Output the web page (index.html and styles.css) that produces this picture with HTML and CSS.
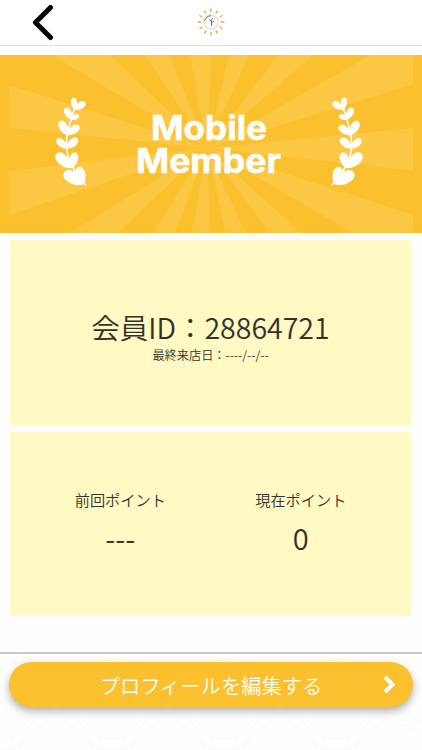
FILE: index.html
```
<!DOCTYPE html>
<html lang="ja">
<head>
    <meta charset="UTF-8">
    <meta name="viewport" content="width=device-width, initial-scale=1.0">
    <title>Mobile Member</title>
    <link rel="stylesheet" href="styles.css">
</head>
<body>

    <header class="header">
        <button class="back" aria-label="戻る">
            <svg width="22" height="36" viewBox="0 0 22 36"><path d="M18.500 2.500L3.500 17.500L18.500 32.500"/></svg>
        </button>
        <svg class="logo" width="30" height="30" viewBox="-15 -14 30 30">
            <defs><path id="petal" d="M0-9Q-2-11.500 0-14Q2-11.500 0-9"/></defs>
            <g class="petals">
                <use href="#petal"/>
                <use href="#petal" transform="rotate(30)"/>
                <use href="#petal" transform="rotate(60)"/>
                <use href="#petal" transform="rotate(90)"/>
                <use href="#petal" transform="rotate(120)"/>
                <use href="#petal" transform="rotate(150)"/>
                <use href="#petal" transform="rotate(180)"/>
                <use href="#petal" transform="rotate(210)"/>
                <use href="#petal" transform="rotate(240)"/>
                <use href="#petal" transform="rotate(270)"/>
                <use href="#petal" transform="rotate(300)"/>
                <use href="#petal" transform="rotate(330)"/>
            </g>
            <circle class="logo-ring" r="7"/>
            <path class="logo-arc" d="M-6.500-1Q-5-6 0-6.300"/>
            <path class="logo-mark" d="M-2-2.500L0-1L2-4M0-1L1 0L3-.5M.5 0V4"/>
        </svg>
    </header>

    <main>
        <svg class="banner" viewBox="0 0 422 178">
            <path class="rays" d="M207 93L9 30V73ZM207 93L9 116V160ZM207 93L52 0H110ZM207 93L145 0H169ZM207 93L190 0H211ZM207 93L229 0H249ZM207 93L279 0H313ZM207 93L371 0H413V29ZM207 93L413 73V116ZM207 93L413 160V178H353ZM207 93L301 178H270ZM207 93L245 178H226ZM207 93L210 178H192ZM207 93L175 178H153ZM207 93L118 178H70Z"/>
            <defs>
                <path id="leaf" d="M0 0C-4-2.500-5.500-12-1-13C4-14 4.500-4 0 0Z"/>
                <g id="laurel">
                    <path class="stem" d="M85.500 129.500Q77 122 73 112Q67 103 66.500 92Q66 80 70 68L75 52"/>
                    <use href="#leaf" transform="translate(74.500 54.500) rotate(-2) scale(.9)"/>
                    <use href="#leaf" transform="translate(74 54.500) rotate(60) scale(1.020)"/>
                    <use href="#leaf" transform="translate(71.500 64.500) rotate(-25) scale(1)"/>
                    <use href="#leaf" transform="translate(70 64.500) rotate(67) scale(.76)"/>
                    <use href="#leaf" transform="translate(67.500 80) rotate(-25) scale(1.220)"/>
                    <use href="#leaf" transform="translate(67 80) rotate(54) scale(1.150)"/>
                    <use href="#leaf" transform="translate(67 93.500) rotate(-44) scale(1.050)"/>
                    <use href="#leaf" transform="translate(66.500 93.500) rotate(50) scale(1.130)"/>
                    <use href="#leaf" transform="translate(71 113) rotate(-43) scale(1.560)"/>
                    <use href="#leaf" transform="translate(71.500 113.500) rotate(16) scale(1.250)"/>
                    <use href="#leaf" transform="translate(84 129) rotate(-58) scale(1.750)"/>
                    <use href="#leaf" transform="translate(83.500 129) rotate(-14) scale(1.350)"/>
                </g>
            </defs>
            <use href="#laurel"/>
            <use href="#laurel" transform="translate(418 0) scale(-1 1)"/>
            <text class="banner-title" x="151" y="84.500" textLength="116" lengthAdjust="spacingAndGlyphs">Mobile</text>
            <text class="banner-title" x="136" y="118" textLength="145" lengthAdjust="spacingAndGlyphs">Member</text>
        </svg>

        <section class="card">
            <p class="member-id">会員ID：28864721</p>
            <p class="last-visit">最終来店日：----/--/--</p>
        </section>

        <section class="card points">
            <div class="point">
                <p class="point-label">前回ポイント</p>
                <p class="point-value">---</p>
            </div>
            <div class="point">
                <p class="point-label">現在ポイント</p>
                <p class="point-value">0</p>
            </div>
        </section>
    </main>

    <footer class="footer">
        <!-- faint ring pattern behind the button -->
        <svg class="pattern" viewBox="0 0 422 96">
            <defs>
                <g id="rings">
                    <circle cx="0" cy="45" r="40"/>
                    <circle cx="0" cy="45" r="50"/>
                    <circle cx="56" cy="109" r="40"/>
                    <circle cx="56" cy="109" r="50"/>
                </g>
            </defs>
            <use href="#rings"/>
            <use href="#rings" x="112"/>
            <use href="#rings" x="224"/>
            <use href="#rings" x="336"/>
        </svg>
        <button class="edit-button">
            <span>プロフィールを編集する</span>
            <svg class="chevron" width="14" height="20" viewBox="0 0 14 20"><path d="M2 2L9.500 9.500L2 17"/></svg>
        </button>
    </footer>

</body>
</html>
```
FILE: styles.css
```
* {
    box-sizing: border-box;
}
body {
    margin: 0;
    height: 750px;
    display: flex;
    flex-direction: column;
    overflow: hidden;
    background-color: #fefefe;
    color: #333129;
    font-family: "Noto Sans CJK JP", sans-serif;
    font-weight: 350;
}
p {
    margin: 0;
}
button {
    border: none;
    padding: 0;
    font-family: inherit;
}
.header {
    height: 46px;
    flex: none;
    display: grid;
    grid-template-columns: 1fr 30px 1fr;
    align-items: center;
    background-color: #fff;
    border-bottom: 1px solid #e2e2e2;
}
.back {
    display: flex;
    justify-self: start;
    margin-left: 32px;
    background: none;
}
.back path {
    fill: none;
    stroke: #000;
    stroke-width: 5;
    stroke-linecap: round;
    stroke-linejoin: round;
}
.petals {
    fill: #e3b95c;
}
.logo-ring {
    fill: #fff;
    stroke: #e8e8e8;
    stroke-width: 2;
}
.logo-arc, .logo-mark {
    fill: none;
    stroke: #77736c;
    stroke-width: 1;
}
main {
    height: 607px;
    flex: none;
    padding-top: 9px;
}
.banner {
    display: block;
    width: 422px;
    height: 178px;
    background-color: #fbc02d;
}
.rays {
    fill: #fcc743;
}
#leaf {
    fill: #fff;
}
.stem {
    fill: none;
    stroke: #fff;
    stroke-width: 1.7;
    stroke-linecap: round;
}
.banner-title {
    fill: #fff;
    stroke: #fff;
    stroke-width: 0.5;
    font-family: Inter, sans-serif;
    font-size: 34px;
    font-weight: 700;
}
.card {
    height: 185px;
    margin: 7px 11px 0 10px;
    padding-top: 66px;
    background-color: #fff9c4;
    text-align: center;
}
.member-id {
    font-size: 28.500px;
    line-height: 42px;
}
.last-visit {
    font-size: 12.200px;
    line-height: 14px;
}
.points {
    height: 184px;
    display: grid;
    grid-template-columns: 1fr 1fr;
    padding: 56px 20px 0;
}
.point-label {
    font-size: 15.200px;
    line-height: 22px;
}
.point-value {
    margin-top: 5px;
    font-size: 29px;
    line-height: 44px;
}
.footer {
    position: relative;
    flex: 1;
    margin-top: -1px;
    padding: 8px 9px;
    border-top: 2px solid #c8c8c8;
}
.pattern {
    position: absolute;
    left: 0;
    top: 0;
    width: 422px;
    height: 96px;
    fill: none;
    stroke: #fafaf8;
}
.edit-button {
    position: relative;
    display: grid;
    grid-template-columns: 30px 1fr 30px;
    align-items: center;
    width: 404px;
    height: 45px;
    border-radius: 23px;
    background-color: #fbc02d;
    box-shadow: 0 4px 8px rgba(0, 0, 0, 0.32);
    color: #fff;
    font-size: 20.300px;
    font-weight: 350;
}
.edit-button span {
    grid-column: 2;
}
.chevron {
    fill: none;
    stroke: #fff;
    stroke-width: 4;
}
```
